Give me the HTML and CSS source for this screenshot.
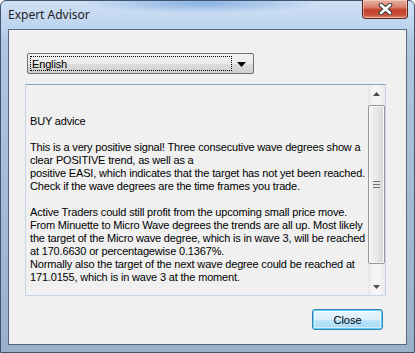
FILE: index.html
```html
<!DOCTYPE html>
<html lang="en">
<head>
    <meta charset="UTF-8">
    <meta name="viewport" content="width=device-width, initial-scale=1.0">
    <link rel="stylesheet" href="styles.css">
    <title>Expert Advisor</title>
</head>
<body>
<div class="window">
    <div class="titlebar">
        <span class="title">Expert Advisor</span>
        <div class="close-x">
            <svg width="17" height="12" viewBox="0 0 17 12">
                <path d="M4 2 L13 10 M13 2 L4 10" stroke="#3a3a3a" stroke-width="4.6" stroke-linecap="round"/>
                <path d="M4 2 L13 10 M13 2 L4 10" stroke="#ffffff" stroke-width="2.6" stroke-linecap="round"/>
            </svg>
        </div>
    </div>

    <div class="client">
        <div class="combo">
            <span class="combo-text">English</span>
            <span class="combo-arrow">
                <svg width="9" height="5" viewBox="0 0 9 5"><path d="M0 0 H9 L4.5 5 Z" fill="#000"/></svg>
            </span>
        </div>

        <div class="textbox">
            <div class="text">
                <p>BUY advice</p>
                <p>This is a very positive signal! Three consecutive wave degrees show a<br>
                clear POSITIVE trend, as well as a<br>
                positive EASI, which indicates that the target has not yet been reached.<br>
                Check if the wave degrees are the time frames you trade.</p>
                <p>Active Traders could still profit from the upcoming small price move.<br>
                From Minuette to Micro Wave degrees the trends are all up. Most likely<br>
                the target of the Micro wave degree, which is in wave 3, will be reached<br>
                at 170.6630 or percentagewise 0.1367%.<br>
                Normally also the target of the next wave degree could be reached at<br>
                171.0155, which is in wave 3 at the moment.</p>
            </div>
            <div class="scrollbar">
                <div class="sb-btn">
                    <svg width="7" height="4" viewBox="0 0 7 4"><path d="M0 4 H7 L3.5 0 Z" fill="#4d4d4d"/></svg>
                </div>
                <div class="sb-thumb"><span class="grip"></span></div>
                <div class="sb-track"></div>
                <div class="sb-btn">
                    <svg width="7" height="4" viewBox="0 0 7 4"><path d="M0 0 H7 L3.5 4 Z" fill="#4d4d4d"/></svg>
                </div>
            </div>
        </div>

        <div class="footer">
            <button class="btn" type="button">Close</button>
        </div>
    </div>
</div>
</body>
</html>
```

FILE: styles.css
```css
/* Global */
* {
    box-sizing: border-box;
    margin: 0;
}

body {
    margin: 0;
    background: #ffffff;
    font-family: "Liberation Sans", Arial, sans-serif;
    font-size: 11px;
    color: #000;
}

/* Window frame */
.window {
    width: 415px;
    height: 353px;
    display: flex;
    flex-direction: column;
    border: 1px solid #3f5470;
    border-radius: 6px 6px 0 0;
    background:
        radial-gradient(ellipse 120px 10px at 200px 2px, rgba(80, 140, 210, 0.55), rgba(80, 140, 210, 0)),
        linear-gradient(to bottom, #cfe0f4 0, #bcd3ee 28px, #afc6e0 40px, #9ab1cc 100%);
}

.titlebar {
    height: 28px;
    display: flex;
    align-items: flex-start;
    justify-content: space-between;
    padding-left: 7px;
}

.title {
    font-family: "Noto Sans", "Open Sans", sans-serif;
    font-size: 12px;
    color: #1e1e1e;
    padding-top: 5px;
}

.close-x {
    width: 46px;
    height: 19px;
    margin-top: -1px;
    margin-right: 6px;
    border: 1px solid #5c2a22;
    border-top: none;
    border-radius: 0 0 4px 4px;
    background: linear-gradient(to bottom, #e8b4a6 0, #d9806b 40%, #c24128 55%, #c9533a 85%, #de9480 100%);
    display: flex;
    align-items: center;
    justify-content: center;
    box-shadow: inset 0 0 0 1px rgba(255, 220, 210, 0.5);
}

/* Client area */
.client {
    flex: 1;
    margin: 0 7px 7px 7px;
    border: 1px solid #58687d;
    background: #f0f0f0;
    padding: 23px 20px 0 16px;
    display: flex;
    flex-direction: column;
}

/* Combo */
.combo {
    width: 227px;
    height: 21px;
    margin-left: 2px;
    border: 1px solid #707070;
    border-radius: 2px;
    background: linear-gradient(to bottom, #f2f2f2 0, #ebebeb 50%, #dddddd 50%, #cfcfcf 100%);
    display: flex;
    align-items: center;
    padding: 2px;
}

.combo-text {
    flex: 1;
    height: 100%;
    border: 1px dotted #000;
    padding-left: 1px;
    line-height: 14px;
    letter-spacing: -0.15px;
}

.combo-arrow {
    width: 19px;
    display: flex;
    justify-content: center;
    padding-top: 1px;
}

/* Text box */
.textbox {
    margin-top: 10px;
    width: 361px;
    height: 212px;
    border: 1px solid #c6d6e6;
    border-top-color: #86a8c8;
    display: flex;
    background: #f0f0f0;
}

.text {
    flex: 1;
    padding: 30px 0 0 4px;
    line-height: 13px;
    letter-spacing: -0.17px;
    white-space: nowrap;
    overflow: hidden;
}

.text p {
    margin-bottom: 13px;
}

.scrollbar {
    width: 17px;
    display: flex;
    flex-direction: column;
    background: linear-gradient(to right, #e6e6e6, #f5f5f5 30%, #f5f5f5 70%, #e9e9e9);
}

.sb-btn {
    height: 17px;
    display: flex;
    align-items: center;
    justify-content: center;
}

.sb-thumb {
    height: 159px;
    margin: 3px 0 0 0;
    border: 1px solid #979797;
    border-radius: 2px;
    background: linear-gradient(to right, #f3f3f3, #e8e8e8 50%, #d6d6d6);
    box-shadow: inset 0 0 0 1px #fafafa;
    display: flex;
    align-items: center;
    justify-content: center;
}

.grip {
    width: 7px;
    height: 7px;
    background: repeating-linear-gradient(to bottom, #757575 0, #757575 1px, #e8e8e8 1px, #e8e8e8 3px);
}

.sb-track {
    flex: 1;
}

/* Button */
.footer {
    display: flex;
    justify-content: flex-end;
    margin-top: 13px;
}

.btn {
    width: 71px;
    height: 21px;
    margin-right: 3px;
    border: 1px solid #3c7fb1;
    border-radius: 3px;
    background: linear-gradient(to bottom, #eaf6fd 0, #d9f0fc 50%, #bee6fd 50%, #a7d9f5 100%);
    box-shadow: inset 0 0 0 1px #5ed3f7, inset 0 0 0 2px rgba(255, 255, 255, 0.5);
    font-family: "Liberation Sans", Arial, sans-serif;
    font-size: 11px;
    color: #000;
    padding: 0;
}
```
